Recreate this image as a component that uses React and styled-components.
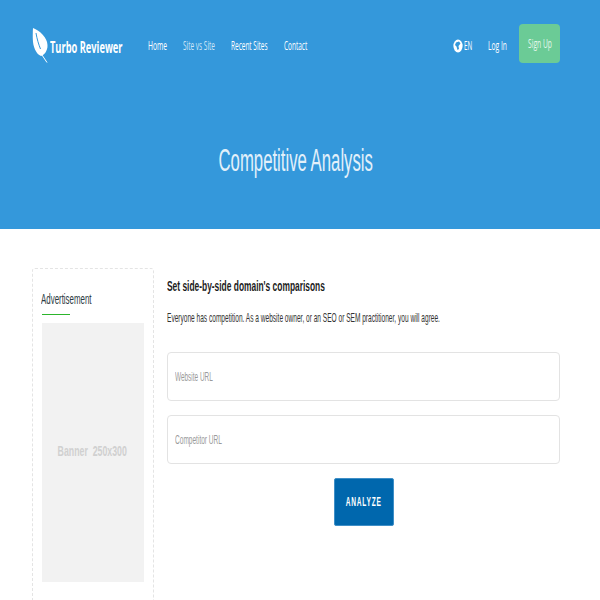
import React from "react";
import styled, { createGlobalStyle } from "styled-components";

const Global = createGlobalStyle`
  html, body { margin: 0; padding: 0; background: #fff; }
  body { font-family: "Liberation Sans", Arial, sans-serif; width: 600px; height: 600px; overflow: hidden; }
  * { box-sizing: border-box; }
`;

const Hero = styled.header`
  height: 229px;
  background: #3498db;
  padding: 24px 40px 0 32px;
  display: flex;
  flex-direction: column;
`;
const TopBar = styled.div`
  display: flex;
  align-items: center;
  height: 39px;
`;
const Logo = styled.a`
  display: flex;
  align-items: flex-start;
  width: 116px;
  height: 39px;
  padding-top: 3px;
`;
const Thin = styled.span`
  display: inline-block;
  white-space: nowrap;
  transform-origin: left center;
  transform: scaleX(${p => p.$s ?? 0.55});
  width: ${p => p.$w}px;
`;
const Brand = styled(Thin)`
  font: 700 16px/1 "Open Sans", sans-serif;
  color: #fff;
  margin: 12px 0 0 1px;
`;
const Nav = styled.nav`
  display: flex;
  gap: 16px;
  flex: 1;
  padding-top: 4px;
`;
const Link = styled(Thin)`
  font: 400 12px/1 "Open Sans", sans-serif;
  color: ${p => (p.$active ? "#cfe6f7" : "#fff")};
`;
const Right = styled.div`
  display: flex;
  align-items: center;
`;
const Lang = styled.div`
  display: flex;
  align-items: center;
  gap: 1px;
  width: 35px;
  padding-top: 4px;
`;
const Login = styled(Link)`
  margin-top: 4px;
`;
const SignUp = styled.button`
  width: 41px;
  height: 39px;
  margin-left: 12px;
  padding: 0;
  border: 0;
  border-radius: 4px;
  background: #6bcb96;
  color: #e4f7ec;
  font: 400 12px/1 "Open Sans", sans-serif;
  display: flex;
  align-items: center;
  justify-content: center;
`;
const SignLabel = styled(Thin)`
  transform-origin: center;
  display: flex;
  justify-content: center;
`;
const Title = styled.h1`
  margin: 80px 0 0;
  padding-right: 1px;
  text-align: center;
  font: 400 31px/36px "Liberation Sans", sans-serif;
  color: #e2f0fa;
  transform: scaleX(0.54);
  white-space: nowrap;
`;
const Main = styled.main`
  display: flex;
  gap: 13px;
  padding: 39px 40px 0 32px;
`;
const Side = styled.aside`
  width: 122px;
  height: 340px;
  flex: none;
  border: 1px dashed #e4e4e4;
  border-radius: 3px;
  padding: 22px 8px 0 9px;
`;
const SideTitle = styled(Thin)`
  font: 400 14px/16px "Liberation Sans", sans-serif;
  color: #2b3a42;
  display: block;
  margin-left: -1px;
`;
const GreenRule = styled.div`
  width: 28px;
  height: 1px;
  background: #2cb52c;
  margin-top: 7px;
`;
const Banner = styled.div`
  margin-top: 8px;
  width: 102px;
  height: 259px;
  background: #f2f2f2;
  display: flex;
  align-items: center;
  justify-content: center;
  padding: 0 2px 4px 0;
`;
const BannerText = styled.span`
  display: inline-block;
  font: 700 15px/1 "Liberation Sans", sans-serif;
  color: #d0d0d0;
  white-space: pre;
  transform: scaleX(0.585);
`;
const Content = styled.section`
  width: 393px;
  display: flex;
  flex-direction: column;
`;
const Heading = styled(Thin)`
  font: 700 14px/18px "Liberation Sans", sans-serif;
  color: #1c1c1c;
  margin-top: -31px;
  padding-top: 40px;
  display: block;
`;
const Lead = styled(Thin)`
  font: 400 13px/16px "Liberation Sans", sans-serif;
  color: #333;
  margin-top: 15px;
  display: block;
`;
const Field = styled.div`
  height: 49px;
  margin-top: ${p => p.$top}px;
  border: 1px solid #e3e3e3;
  border-radius: 4px;
  padding-left: 7px;
  display: flex;
  align-items: center;
  background: #fff;
`;
const Placeholder = styled(Thin)`
  font: 400 13px/1 "Liberation Sans", sans-serif;
  color: #9a9a9a;
`;
const Analyze = styled.button`
  align-self: center;
  width: 60px;
  height: 48px;
  margin-top: 14px;
  padding: 0;
  border: 1px solid #3f8fc7;
  border-radius: 2px;
  background: #0067ad;
  color: #fff;
  display: flex;
  align-items: center;
  justify-content: center;
`;
const AnalyzeLabel = styled.span`
  font: 700 12px/1 "Liberation Sans", sans-serif;
  letter-spacing: 1.4px;
  display: inline-block;
  transform: scaleX(0.55);
  white-space: nowrap;
`;

const Leaf = () => (
  <svg width="17" height="36" viewBox="0 0 17 36" fill="none">
    <path d="M1 1C8 4 15 10 15.5 18C15.8 24 12 28 9 29C4 27 1 20 .8 12C.7 7 .8 4 1 1Z" fill="#fff" />
    <path d="M4 6C5 12 6.500 17 8.500 22" stroke="#3498db" strokeWidth="1" />
    <path d="M10 28L15 35.5" stroke="#fff" strokeWidth="1" />
  </svg>
);
const Globe = () => (
  <svg width="10" height="14" viewBox="0 0 10 14">
    <ellipse cx="5" cy="7" rx="4.6" ry="6.4" fill="#fff" />
    <path d="M3 3.500L6 2.500L7.500 4.500L5.500 7L6 10L4.500 11L3.500 7.500L2 6Z" fill="#3498db" />
  </svg>
);

export default function App() {
  return (
    <>
      <Global />
      <Hero>
        <TopBar>
          <Logo>
            <Leaf />
            <Brand $s={0.58} $w={73}>Turbo Reviewer</Brand>
          </Logo>
          <Nav>
            <Link $w={19} $s={0.56}>Home</Link>
            <Link $w={32} $s={0.54} $active>Site vs Site</Link>
            <Link $w={37} $s={0.54}>Recent Sites</Link>
            <Link $w={23} $s={0.54}>Contact</Link>
          </Nav>
          <Right>
            <Lang>
              <Globe />
              <Link $w={9} $s={0.52}>EN</Link>
            </Lang>
            <Login $w={19} $s={0.56}>Log In</Login>
            <SignUp><SignLabel $w={24} $s={0.56}>Sign Up</SignLabel></SignUp>
          </Right>
        </TopBar>
        <Title>Competitive Analysis</Title>
      </Hero>
      <Main>
        <Side>
          <SideTitle $w={50} $s={0.565}>Advertisement</SideTitle>
          <GreenRule />
          <Banner><BannerText>Banner  250x300</BannerText></Banner>
        </Side>
        <Content>
          <Heading $s={0.6}>Set side-by-side domain's comparisons</Heading>
          <Lead $s={0.505}>Everyone has competition. As a website owner, or an SEO or SEM practitioner, you will agree.</Lead>
          <Field $top={26}><Placeholder $w={38} $s={0.495}>Website URL</Placeholder></Field>
          <Field $top={14}><Placeholder $w={47} $s={0.504}>Competitor URL</Placeholder></Field>
          <Analyze><AnalyzeLabel>ANALYZE</AnalyzeLabel></Analyze>
        </Content>
      </Main>
    </>
  );
}
